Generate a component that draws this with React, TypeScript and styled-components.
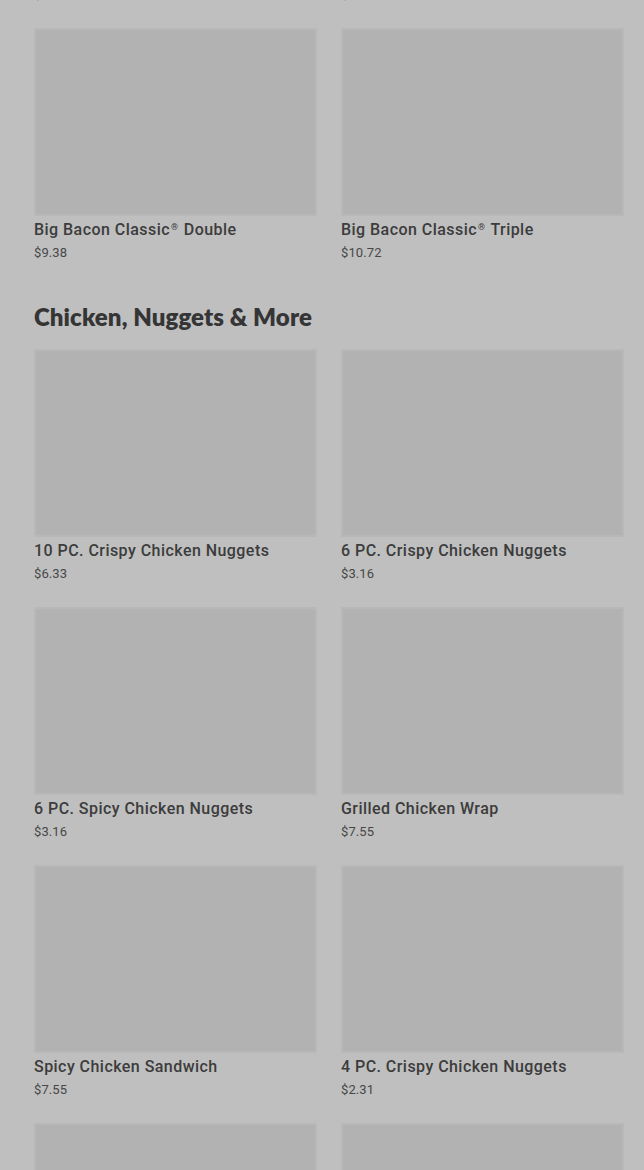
import styled, { createGlobalStyle } from "styled-components";

const GlobalStyle = createGlobalStyle`
  html, body {
    margin: 0;
    padding: 0;
    background: #bfbfbf;
    overflow: hidden;
  }
  body {
    font-family: Roboto, "Liberation Sans", sans-serif;
    color: #383838;
  }
`;

const Page = styled.main`
  margin-top: -230px;
  padding: 0 20px 0 34px;
  display: flex;
  flex-direction: column;
  gap: 39px;
`;

const Section = styled.section`
  display: flex;
  flex-direction: column;
`;

const Heading = styled.h2`
  margin: 0 0 16px;
  font-family: Lato, "Open Sans", sans-serif;
  font-size: 24px;
  line-height: 32px;
  font-weight: 800;
  letter-spacing: 0.1px;
  color: #353535;
`;

const Grid = styled.div`
  display: grid;
  grid-template-columns: repeat(2, 283px);
  column-gap: 24px;
  row-gap: 24px;
`;

const Card = styled.article`
  display: flex;
  flex-direction: column;
`;

const Thumb = styled.div`
  height: 188px;
  background: #b2b2b2;
  box-shadow: inset 0 0 0 2px #b8b8b8;
`;

const Name = styled.div`
  margin-top: 4px;
  height: 20px;
  font-size: 16px;
  line-height: 20px;
  font-weight: 500;
  letter-spacing: 0.45px;
  color: #3c3c3c;
  white-space: nowrap;
`;

const Reg = styled.span`
  font-size: 0.55em;
  line-height: 0;
  vertical-align: 0.6em;
  margin: 0 1px;
`;

const Price = styled.div`
  margin-top: 4px;
  font-size: 13px;
  line-height: 18px;
  letter-spacing: 0.1px;
  color: #474747;
`;

interface Item {
  name: string;
  price: string;
}

const burgers: Item[] = [
  { name: "Son of Baconator®", price: "$7.26" },
  { name: "Baconator®", price: "$10.14" },
  { name: "Big Bacon Classic® Double", price: "$9.38" },
  { name: "Big Bacon Classic® Triple", price: "$10.72" },
];

const chicken: Item[] = [
  { name: "10 PC. Crispy Chicken Nuggets", price: "$6.33" },
  { name: "6 PC. Crispy Chicken Nuggets", price: "$3.16" },
  { name: "6 PC. Spicy Chicken Nuggets", price: "$3.16" },
  { name: "Grilled Chicken Wrap", price: "$7.55" },
  { name: "Spicy Chicken Sandwich", price: "$7.55" },
  { name: "4 PC. Crispy Chicken Nuggets", price: "$2.31" },
  { name: "Classic Chicken Sandwich", price: "$7.55" },
  { name: "Spicy Chicken Wrap", price: "$7.55" },
];

function ItemName({ text }: { text: string }) {
  const parts = text.split("®");
  return (
    <Name>
      {parts.map((part, i) => (
        <span key={i}>
          {part}
          {i < parts.length - 1 && <Reg>®</Reg>}
        </span>
      ))}
    </Name>
  );
}

function MenuCard({ item }: { item: Item }) {
  return (
    <Card>
      <Thumb />
      <ItemName text={item.name} />
      <Price>{item.price}</Price>
    </Card>
  );
}

export default function App() {
  return (
    <>
      <GlobalStyle />
      <Page>
        <Section>
          <Grid>
            {burgers.map((item) => (
              <MenuCard key={item.name} item={item} />
            ))}
          </Grid>
        </Section>
        <Section>
          <Heading>Chicken, Nuggets &amp; More</Heading>
          <Grid>
            {chicken.map((item) => (
              <MenuCard key={item.name} item={item} />
            ))}
          </Grid>
        </Section>
      </Page>
    </>
  );
}
